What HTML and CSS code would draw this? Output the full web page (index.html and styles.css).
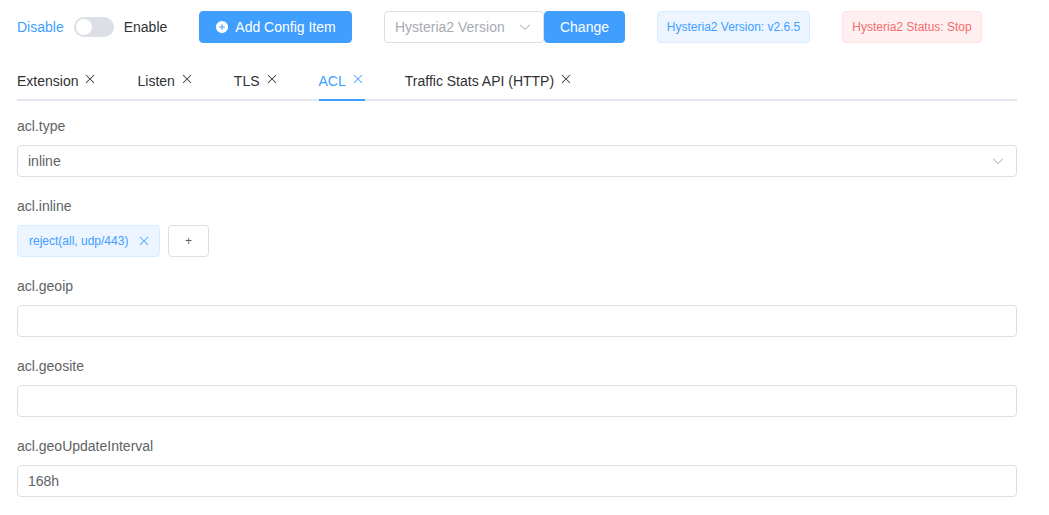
FILE: index.html
```html
<!DOCTYPE html>
<html lang="en">
<head>
<meta charset="utf-8">
<title>Hysteria2</title>
<link rel="stylesheet" href="styles.css">
</head>
<body>
<main class="page">
  <div class="toolbar">
    <div class="switch-group">
      <span class="switch-label active">Disable</span>
      <span class="switch"><span class="knob"></span></span>
      <span class="switch-label">Enable</span>
    </div>
    <button class="btn add-btn" type="button">
      <svg class="btn-icon" viewBox="0 0 1024 1024"><path fill="currentColor" d="M512 64a448 448 0 1 1 0 896 448 448 0 0 1 0-896zm-38.4 409.6H326.4a38.4 38.4 0 1 0 0 76.8h147.2v147.2a38.4 38.4 0 0 0 76.8 0V550.4h147.2a38.4 38.4 0 0 0 0-76.8H550.4V326.4a38.4 38.4 0 1 0-76.8 0v147.2z"/></svg>
      <span>Add Config Item</span>
    </button>
    <div class="version-group">
      <div class="select version-select">
        <span class="placeholder">Hysteria2 Version</span>
        <svg class="arrow" viewBox="0 0 1024 1024"><path fill="currentColor" d="M831.872 340.864 512 652.672 192.128 340.864a30.592 30.592 0 0 0-42.752 0 29.12 29.12 0 0 0 0 41.6L489.664 714.24a32 32 0 0 0 44.672 0l340.288-331.712a29.12 29.12 0 0 0 0-41.728 30.592 30.592 0 0 0-42.752 0z"/></svg>
      </div>
      <button class="btn change-btn" type="button">Change</button>
    </div>
    <span class="tag tag-info version-tag">Hysteria2 Version: v2.6.5</span>
    <span class="tag tag-danger status-tag">Hysteria2 Status: Stop</span>
  </div>

  <nav class="tabs">
    <div class="tab">Extension<svg class="close" viewBox="0 0 1024 1024"><path fill="currentColor" d="M764.288 214.592 512 466.88 259.712 214.592a31.936 31.936 0 0 0-45.12 45.12L466.752 512 214.528 764.224a31.936 31.936 0 1 0 45.12 45.184L512 557.184l252.288 252.288a31.936 31.936 0 0 0 45.12-45.12L557.12 512.064l252.288-252.352a31.936 31.936 0 1 0-45.12-45.12z"/></svg></div>
    <div class="tab">Listen<svg class="close" viewBox="0 0 1024 1024"><path fill="currentColor" d="M764.288 214.592 512 466.88 259.712 214.592a31.936 31.936 0 0 0-45.12 45.12L466.752 512 214.528 764.224a31.936 31.936 0 1 0 45.12 45.184L512 557.184l252.288 252.288a31.936 31.936 0 0 0 45.12-45.12L557.12 512.064l252.288-252.352a31.936 31.936 0 1 0-45.12-45.12z"/></svg></div>
    <div class="tab">TLS<svg class="close" viewBox="0 0 1024 1024"><path fill="currentColor" d="M764.288 214.592 512 466.88 259.712 214.592a31.936 31.936 0 0 0-45.12 45.12L466.752 512 214.528 764.224a31.936 31.936 0 1 0 45.12 45.184L512 557.184l252.288 252.288a31.936 31.936 0 0 0 45.12-45.12L557.12 512.064l252.288-252.352a31.936 31.936 0 1 0-45.12-45.12z"/></svg></div>
    <div class="tab is-active"><span class="tab-inner">ACL<svg class="close" viewBox="0 0 1024 1024"><path fill="currentColor" d="M764.288 214.592 512 466.88 259.712 214.592a31.936 31.936 0 0 0-45.12 45.12L466.752 512 214.528 764.224a31.936 31.936 0 1 0 45.12 45.184L512 557.184l252.288 252.288a31.936 31.936 0 0 0 45.12-45.12L557.12 512.064l252.288-252.352a31.936 31.936 0 1 0-45.12-45.12z"/></svg></span></div>
    <div class="tab">Traffic Stats API (HTTP)<svg class="close" viewBox="0 0 1024 1024"><path fill="currentColor" d="M764.288 214.592 512 466.88 259.712 214.592a31.936 31.936 0 0 0-45.12 45.12L466.752 512 214.528 764.224a31.936 31.936 0 1 0 45.12 45.184L512 557.184l252.288 252.288a31.936 31.936 0 0 0 45.12-45.12L557.12 512.064l252.288-252.352a31.936 31.936 0 1 0-45.12-45.12z"/></svg></div>
  </nav>

  <form class="form">
    <div class="form-item">
      <label class="form-label">acl.type</label>
      <div class="select">
        <span class="value">inline</span>
        <svg class="arrow" viewBox="0 0 1024 1024"><path fill="currentColor" d="M831.872 340.864 512 652.672 192.128 340.864a30.592 30.592 0 0 0-42.752 0 29.12 29.12 0 0 0 0 41.6L489.664 714.24a32 32 0 0 0 44.672 0l340.288-331.712a29.12 29.12 0 0 0 0-41.728 30.592 30.592 0 0 0-42.752 0z"/></svg>
      </div>
    </div>
    <div class="form-item">
      <label class="form-label">acl.inline</label>
      <div class="tag-row">
        <span class="tag tag-info chip">reject(all, udp/443)<svg class="chip-close" viewBox="0 0 1024 1024"><path fill="currentColor" d="M764.288 214.592 512 466.88 259.712 214.592a31.936 31.936 0 0 0-45.12 45.12L466.752 512 214.528 764.224a31.936 31.936 0 1 0 45.12 45.184L512 557.184l252.288 252.288a31.936 31.936 0 0 0 45.12-45.12L557.12 512.064l252.288-252.352a31.936 31.936 0 1 0-45.12-45.12z"/></svg></span>
        <button class="plus-btn" type="button">+</button>
      </div>
    </div>
    <div class="form-item">
      <label class="form-label">acl.geoip</label>
      <input class="input" type="text">
    </div>
    <div class="form-item">
      <label class="form-label">acl.geosite</label>
      <input class="input" type="text">
    </div>
    <div class="form-item">
      <label class="form-label">acl.geoUpdateInterval</label>
      <input class="input" type="text" value="168h">
    </div>
  </form>
</main>
</body>
</html>
```
FILE: styles.css
```css
* { box-sizing: border-box; }
html, body { margin: 0; padding: 0; background: #fff; }
body {
  font-family: "Liberation Sans", Arial, sans-serif;
  font-size: 14px;
  color: #606266;
  overflow: hidden;
}
.page { width: 1017px; padding: 11px 0 0 17px; }

.toolbar { display: flex; align-items: center; height: 32px; margin-bottom: 18px; }
.switch-group { display: flex; align-items: center; width: 182px; }
.switch-label { color: #303133; line-height: 20px; }
.switch-label.active { color: #409eff; }
.switch {
  width: 40px; height: 20px; margin: 0 10px; border-radius: 10px;
  background: #dcdfe6; padding: 2px; display: block;
}
.knob { display: block; width: 16px; height: 16px; border-radius: 50%; background: #fff; }

.btn {
  height: 32px; border: 1px solid #409eff; border-radius: 4px;
  background: #409eff; color: #fff; font: inherit;
  display: inline-flex; align-items: center; justify-content: center; padding: 0;
}
.add-btn { width: 153px; margin-right: 32px; }
.btn-icon { width: 14px; height: 14px; margin-right: 6px; }
.version-group { display: flex; margin-right: 32px; }
.change-btn { width: 81px; }

.select {
  height: 32px; border: 1px solid #dcdfe6; border-radius: 4px;
  display: flex; align-items: center; justify-content: space-between;
  padding: 0 11px 0 10px; background: #fff;
}
.version-select { width: 160px; }
.placeholder { color: #a8abb2; }
.value { color: #606266; }
.arrow { width: 14px; height: 14px; color: #a8abb2; }

.tag {
  display: inline-flex; align-items: center; height: 32px;
  border-radius: 4px; font-size: 12px; border: 1px solid;
}
.tag-info { background: #ecf5ff; border-color: #d9ecff; color: #409eff; }
.tag-danger { background: #fef0f0; border-color: #fde2e2; color: #f56c6c; }
.version-tag { width: 153px; justify-content: center; margin-right: 32px; }
.status-tag { width: 140px; justify-content: center; }

.tabs { display: flex; height: 40px; border-bottom: 2px solid #e4e7ed; margin-bottom: 14px; }
.tab {
  height: 40px; line-height: 40px; padding: 0 20px; color: #303133;
  display: flex; white-space: nowrap;
}
.tab:first-child { padding-left: 0; }
.tab.is-active { color: #409eff; }
.tab-inner { display: flex; height: 40px; border-bottom: 2px solid #409eff; }
.close { width: 14px; height: 14px; margin: 11px 0 0 5px; }

.form-item { margin-bottom: 18px; }
.form-label { display: block; height: 22px; line-height: 22px; margin-bottom: 8px; }
.input {
  display: block; width: 100%; height: 32px; border: 1px solid #dcdfe6; border-radius: 4px;
  padding: 0 10px; font: inherit; color: #606266; outline: none; background: #fff;
}
.tag-row { display: flex; gap: 8px; }
.chip { width: 143px; padding-left: 11px; }
.chip-close { width: 14px; height: 14px; margin-left: 9px; }
.plus-btn {
  width: 41px; height: 32px; border: 1px solid #dcdfe6; border-radius: 4px;
  background: #fff; color: #606266; font: inherit; font-size: 12px; padding: 0;
}
```
